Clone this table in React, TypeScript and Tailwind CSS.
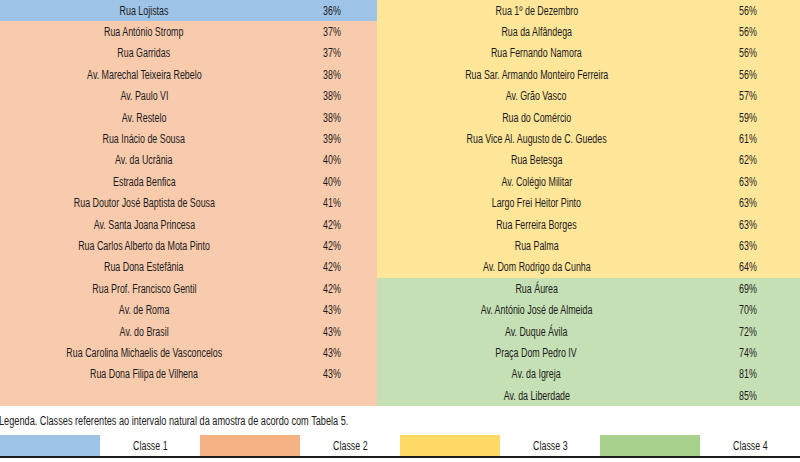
const left: [string, string][] = [
  ["Rua Lojistas", "36%"],
  ["Rua António Stromp", "37%"],
  ["Rua Garridas", "37%"],
  ["Av. Marechal Teixeira Rebelo", "38%"],
  ["Av. Paulo VI", "38%"],
  ["Av. Restelo", "38%"],
  ["Rua Inácio de Sousa", "39%"],
  ["Av. da Ucrânia", "40%"],
  ["Estrada Benfica", "40%"],
  ["Rua Doutor José Baptista de Sousa", "41%"],
  ["Av. Santa Joana Princesa", "42%"],
  ["Rua Carlos Alberto da Mota Pinto", "42%"],
  ["Rua Dona Estefânia", "42%"],
  ["Rua Prof. Francisco Gentil", "42%"],
  ["Av. de Roma", "43%"],
  ["Av. do Brasil", "43%"],
  ["Rua Carolina Michaelis de Vasconcelos", "43%"],
  ["Rua Dona Filipa de Vilhena", "43%"],
  ["", ""],
];

const right: [string, string][] = [
  ["Rua 1º de Dezembro", "56%"],
  ["Rua da Alfândega", "56%"],
  ["Rua Fernando Namora", "56%"],
  ["Rua Sar. Armando Monteiro Ferreira", "56%"],
  ["Av. Grão Vasco", "57%"],
  ["Rua do Comércio", "59%"],
  ["Rua Vice Al. Augusto de C. Guedes", "61%"],
  ["Rua Betesga", "62%"],
  ["Av. Colégio Militar", "63%"],
  ["Largo Frei Heitor Pinto", "63%"],
  ["Rua Ferreira Borges", "63%"],
  ["Rua Palma", "63%"],
  ["Av. Dom Rodrigo da Cunha", "64%"],
  ["Rua Áurea", "69%"],
  ["Av. António José de Almeida", "70%"],
  ["Av. Duque Ávila", "72%"],
  ["Praça Dom Pedro IV", "74%"],
  ["Av. da Igreja", "81%"],
  ["Av. da Liberdade", "85%"],
];

const Narrow = ({ children }: { children: React.ReactNode }) => (
  <span className="inline-block whitespace-nowrap scale-x-[0.74]">{children}</span>
);

const Row = ({
  name,
  pct,
  bg,
  nameW,
}: {
  name: string;
  pct: string;
  bg: string;
  nameW: string;
}) => (
  <div className={`flex h-[21.4px] items-center ${bg}`}>
    <div className={`${nameW} flex justify-center`}>
      <Narrow>{name}</Narrow>
    </div>
    <div className="flex flex-1 justify-center">
      <Narrow>{pct}</Narrow>
    </div>
  </div>
);

export default function App() {
  return (
    <div
      className="w-[800px] h-[462px] overflow-hidden bg-white text-[12px] leading-none text-[#1c1a1b]"
      style={{ fontFamily: '"Liberation Sans", Arial, sans-serif' }}
    >
      <div className="flex">
        <div className="w-[377px] bg-[#f8cbad]">
          {left.map(([n, p], i) => (
            <Row
              key={i}
              name={n}
              pct={p}
              nameW="w-[288px]"
              bg={i === 0 ? "bg-[#9dc3e6]" : "bg-[#f8cbad]"}
            />
          ))}
        </div>
        <div className="flex-1">
          {right.map(([n, p], i) => (
            <Row
              key={i}
              name={n}
              pct={p}
              nameW="w-[319px]"
              bg={i < 13 ? "bg-[#ffe699]" : "bg-[#c5e0b4]"}
            />
          ))}
        </div>
      </div>

      <div className="flex h-[29px] items-center -ml-px">
        <span className="inline-block whitespace-nowrap origin-left scale-x-[0.765]">
          Legenda. Classes referentes ao intervalo natural da amostra de acordo com Tabela 5.
        </span>
      </div>

      <div className="grid grid-cols-8 h-[21px] border-b-2 border-[#1a1a1a] box-content">
        <div className="bg-[#9dc3e6]" />
        <div className="flex items-center justify-center">
          <Narrow>Classe 1</Narrow>
        </div>
        <div className="bg-[#f4b183]" />
        <div className="flex items-center justify-center">
          <Narrow>Classe 2</Narrow>
        </div>
        <div className="bg-[#ffd966]" />
        <div className="flex items-center justify-center">
          <Narrow>Classe 3</Narrow>
        </div>
        <div className="bg-[#a9d18e]" />
        <div className="flex items-center justify-center">
          <Narrow>Classe 4</Narrow>
        </div>
      </div>
    </div>
  );
}
